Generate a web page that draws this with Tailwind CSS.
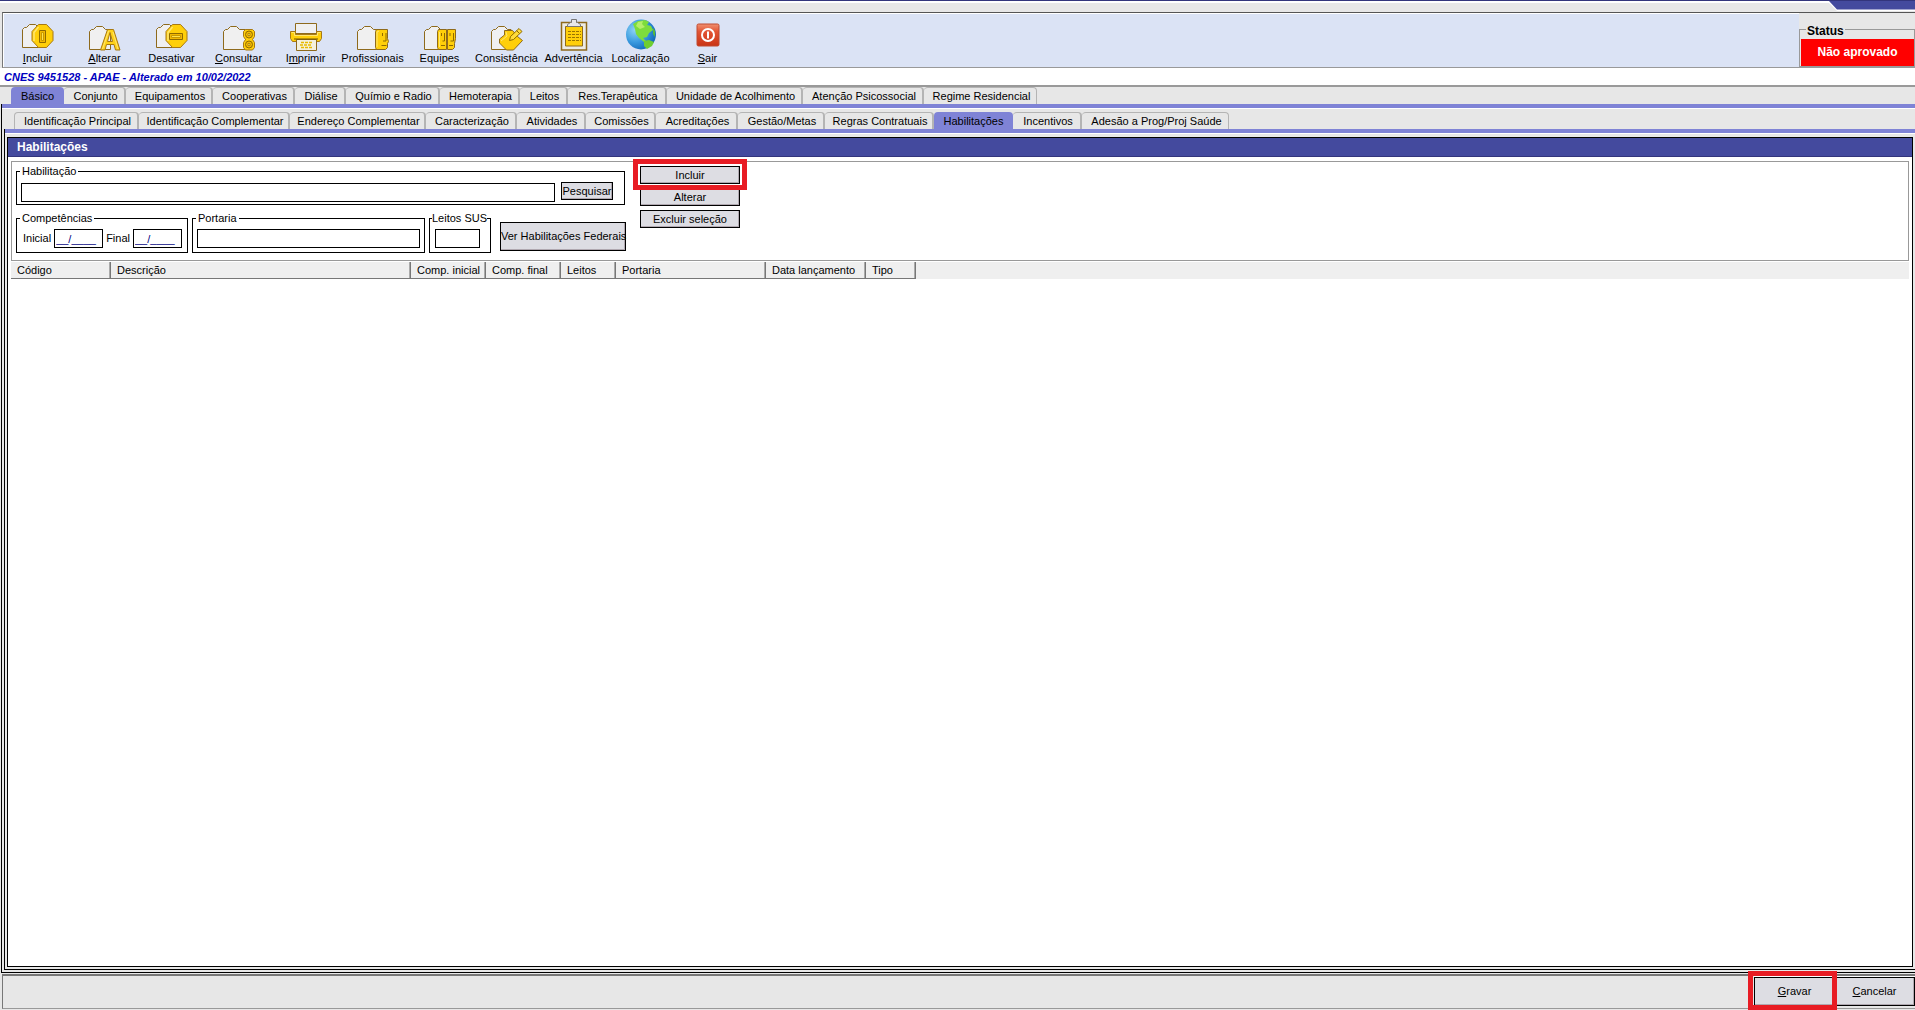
<!DOCTYPE html>
<html lang="pt-BR">
<head>
    <meta charset="UTF-8">
    <meta name="viewport" content="width=device-width, initial-scale=1.0">
    <title>CNES - Habilitações</title>
    <script src="https://cdn.jsdelivr.net/npm/@tailwindcss/browser@4"></script>
</head>
<body class="flex h-screen flex-col overflow-hidden bg-[#e7e7e7] font-['Liberation_Sans',Arial,sans-serif] text-[11px] leading-[15px] text-black">

    <!-- Window edge -->
    <div class="flex h-3 shrink-0 items-start justify-end border-t border-[#33357c]">
        <div class="h-[2px] flex-1 bg-white"></div>
        <svg class="h-[10px] w-[87px]" viewBox="0 0 87 10" aria-hidden="true">
            <path d="M0 0h87v10H9L1 2H0z" fill="#fff"/>
            <path d="M1 0h86v8.5H9z" fill="#444a9e"/>
        </svg>
    </div>

    <!-- Toolbar -->
    <header class="ml-[2px] flex h-14 shrink-0 border-y border-l border-t-[#555] border-b-[#999] border-l-[#777] bg-[#dbe3f5]">
        <nav class="flex flex-1 border-t border-l border-white">
            <button class="flex w-[67px] flex-col items-center pt-[5px]">
                <svg class="h-8 w-[34px] shrink-0" viewBox="0 0 34 32" aria-hidden="true">
                    <path d="M1.5 28.5V10.5L3.5 8.5H5.5L8.5 5.5H14.5L17.5 8.5H22V28.5z" fill="#f0f0f0" stroke="#8e6a1c"/>
                    <path d="M17.5 5.5h8l6.500 7v9l-6.500 7h-8l-6.500-7v-9z" fill="#ffcf0a" stroke="#a87912" stroke-linejoin="round"/>
                    <path d="M13 22v-8.500l4.500-5.500" fill="none" stroke="#ffe671" stroke-width="1.500"/>
                    <path d="M18.500 11.500h6v12h-6z" fill="#f3b800" stroke="#8e6a00"/>
                    <path d="M20.500 13.500h2v8h-2z" fill="#ffe14f" stroke="#c89800"/>
                </svg>
                <span><u>I</u>ncluir</span>
            </button>
            <button class="flex w-[67px] flex-col items-center pt-[5px]">
                <svg class="h-8 w-[34px] shrink-0" viewBox="0 0 34 32" aria-hidden="true">
                    <path d="M1.5 30.5V12.5L3.5 10.5H5.5L8.5 7.5H14.5L17.5 10.5H22.500V30.5z" fill="#f0f0f0" stroke="#8e6a1c"/>
                    <path fill-rule="evenodd" d="M12.500 31L19.500 10.500h6l6.500 20.500h-4.500l-1.500-5.500h-7.500L17 31zM19.500 22.500h5l-2.500-9z" fill="#ffd21a" stroke="#a87912"/>
                    <path d="M14.500 30l6-18M25 13l5 17" stroke="#ffe671" fill="none"/>
                </svg>
                <span><u>A</u>lterar</span>
            </button>
            <button class="flex w-[67px] flex-col items-center pt-[5px]">
                <svg class="h-8 w-[34px] shrink-0" viewBox="0 0 34 32" aria-hidden="true">
                    <path d="M1.5 28.5V10.5L3.5 8.5H5.5L8.5 5.5H14.5L17.5 8.5H22V28.5z" fill="#f0f0f0" stroke="#8e6a1c"/>
                    <path d="M17.5 5.5h8l6.500 7v9l-6.500 7h-8l-6.500-7v-9z" fill="#ffcf0a" stroke="#a87912" stroke-linejoin="round"/>
                    <path d="M13 22v-8.500l4.500-5.500" fill="none" stroke="#ffe671" stroke-width="1.500"/>
                    <path d="M14.500 14.500h13v6h-13z" fill="#f3b800" stroke="#8e6a00"/>
                    <path d="M16.500 16.500h9v2h-9z" fill="#ffe14f" stroke="#c89800"/>
                </svg>
                <span>Desativar</span>
            </button>
            <button class="flex w-[67px] flex-col items-center pt-[5px]">
                <svg class="h-8 w-[34px] shrink-0" viewBox="0 0 34 32" aria-hidden="true">
                    <path d="M1.5 30.5V12.5L3.5 10.5H5.5L8.5 7.5H14.5L17.5 10.5H23.500V30.5z" fill="#f0f0f0" stroke="#8e6a1c"/>
                    <path d="M23.500 10.500h7l2 2v5l-2 3 2 3v5l-2 2.500h-7l-2-2.500v-5l2-3-2-3v-5z" fill="#ffcf0a" stroke="#a87912"/>
                    <circle cx="27" cy="15.500" r="3.500" fill="#f3b800" stroke="#8e6a00"/>
                    <circle cx="27" cy="25.500" r="3.500" fill="#f3b800" stroke="#8e6a00"/>
                    <path d="M26 14.500h2v2h-2zM26 24.500h2v2h-2z" fill="#ffe14f" stroke="#8e6a00" stroke-width=".6"/>
                </svg>
                <span><u>C</u>onsultar</span>
            </button>
            <button class="flex w-[67px] flex-col items-center pt-[5px]">
                <svg class="h-8 w-[34px] shrink-0" viewBox="0 0 34 32" aria-hidden="true">
                    <path d="M6.500 4.500h21v10h-21z" fill="#f0f0f0" stroke="#8e6a1c"/>
                    <path d="M1.500 12.500h5v3h21v-3h5v7l-2 3h-27l-2-3z" fill="#ffcf0a" stroke="#a87912"/>
                    <path d="M2.500 13.500h3v3h23v-3h3" fill="none" stroke="#ffe671"/>
                    <path d="M7.500 20.500h20v11h-20z" fill="#f4f0dc" stroke="#8e6a1c"/>
                    <path d="M5 20h24" stroke="#6e5200"/>
                    <path d="M12 23.500h12M11 26h12M12 28.500h12" stroke="#e8ba00" stroke-width="1.500" stroke-dasharray="3 1"/>
                </svg>
                <span>I<u>m</u>primir</span>
            </button>
            <button class="flex w-[67px] flex-col items-center pt-[5px]">
                <svg class="h-8 w-[34px] shrink-0" viewBox="0 0 34 32" aria-hidden="true">
                    <path d="M1.5 30.5V12.5L3.5 10.5H5.5L8.5 7.5H14.5L17.5 10.5H22V30.5z" fill="#f0f0f0" stroke="#8e6a1c"/>
                    <path d="M20.500 10.500h11v9l1 3-1 2v4l-2 2h-9l-1-2v-16z" fill="#ffcf0a" stroke="#8e6a1c"/>
                    <path d="M21 28v-15l2-1" stroke="#ffe671" fill="none"/>
                    <path d="M26.500 14v3M30 14v8h-3M25.500 26.500h5" stroke="#8e6a00" fill="none"/>
                </svg>
                <span>Profissionais</span>
            </button>
            <button class="flex w-[67px] flex-col items-center pt-[5px]">
                <svg class="h-8 w-[34px] shrink-0" viewBox="0 0 34 32" aria-hidden="true">
                    <path d="M1.5 30.5V12.5L3.5 10.5H5.5L8.5 7.5H14.5L17.5 10.5V30.5z" fill="#f0f0f0" stroke="#8e6a1c"/>
                    <path d="M15.500 10.500h8v20h-8l-1-2v-16z" fill="#ffcf0a" stroke="#8e6a1c"/>
                    <path d="M24.500 10.500h8v9l-1 5v4l-2 2h-5z" fill="#ffcf0a" stroke="#8e6a1c"/>
                    <path d="M16.500 28v-15" stroke="#ffe671"/>
                    <path d="M18.500 14v3M21.500 14v8h-2M18 26.500h4M27 14v3M30.500 14v8h-3M26 26.500h4" stroke="#8e6a00" fill="none"/>
                </svg>
                <span>Equipes</span>
            </button>
            <button class="flex w-[67px] flex-col items-center pt-[5px]">
                <svg class="h-8 w-[34px] shrink-0" viewBox="0 0 34 32" aria-hidden="true">
                    <path d="M1.5 30.5V12.5L3.5 10.5H5.5L8.5 7.5H14.5L17.5 10.5H21V30.5z" fill="#f0f0f0" stroke="#8e6a1c"/>
                    <path d="M14.500 11.500h8l5 6 5 4-9 9.500h-7l-7-7v-4l5-4z" fill="#ffcf0a" stroke="#8e6a1c"/>
                    <path d="M11 22l6-5-1-4" stroke="#ffe671" fill="none"/>
                    <path d="M19.500 21.500l1-4 8.500-8 3 3-8.500 8z" fill="#ffdb3a" stroke="#8e6a00"/>
                    <path d="M26.500 11.500l3 3" stroke="#8e6a00"/>
                </svg>
                <span>Consistência</span>
            </button>
            <button class="flex w-[67px] flex-col items-center pt-[5px]">
                <svg class="h-8 w-[34px] shrink-0" viewBox="0 0 34 32" aria-hidden="true">
                    <path d="M4.500 3.500h25v27.500h-25z" fill="#ecebe4" stroke="#8e6a1c" stroke-width="1.500"/>
                    <path d="M8.500 7.500h17v19.500h-17z" fill="#ffcf0a" stroke="#8e6a1c"/>
                    <path d="M11 12.500h13M11 15.500h13M11 18.500h13M11 21.500h13" stroke="#9a7400" stroke-dasharray="3 1"/>
                    <path d="M10.500 7.500v-2l3-2h1v-3h5v3h1l3 2v2z" fill="#e8e8ea" stroke="#777"/>
                </svg>
                <span>Advertência</span>
            </button>
            <button class="flex w-[67px] flex-col items-center pt-[5px]">
                <svg class="h-8 w-[34px] shrink-0" viewBox="0 0 34 32" aria-hidden="true">
                    <defs>
                        <radialGradient id="ocean" cx=".3" cy=".35" r=".8">
                            <stop offset="0" stop-color="#8fd3f5"/>
                            <stop offset=".5" stop-color="#3a9be0"/>
                            <stop offset="1" stop-color="#0a5fb0"/>
                        </radialGradient>
                    </defs>
                    <circle cx="17" cy="15.500" r="15" fill="url(#ocean)"/>
                    <path d="M9 5l5-3 7-1 4 2-2 3 4 1 2 4-4 3-2 4-4 1 3 3-2 1-5-4-3-4-1-5z" fill="#7ddc3c"/>
                    <path d="M14 3l5-1-1 3 3 3-5 2-4-3z" fill="#b4ee6a"/>
                    <path d="M20 22l5-1 5 2-2 4-5 3-3-3z" fill="#6fce30"/>
                    <path d="M29 9l2 3v6l-2-3z" fill="#55b83c"/>
                </svg>
                <span>Localização</span>
            </button>
            <button class="flex w-[67px] flex-col items-center pt-[5px]">
                <svg class="h-8 w-[34px] shrink-0" viewBox="0 0 34 32" aria-hidden="true">
                    <defs>
                        <linearGradient id="exit" x1="0" y1="0" x2="0" y2="1">
                            <stop offset="0" stop-color="#f09070"/>
                            <stop offset=".35" stop-color="#e25434"/>
                            <stop offset="1" stop-color="#c93414"/>
                        </linearGradient>
                    </defs>
                    <rect x="6" y="5" width="22" height="22" rx="1.500" fill="url(#exit)" stroke="#c04a30"/>
                    <circle cx="17" cy="16" r="6" fill="none" stroke="#fff" stroke-width="2"/>
                    <path d="M17 12.500v7" stroke="#fff" stroke-width="2"/>
                </svg>
                <span><u>S</u>air</span>
            </button>
        </nav>
        <div class="flex w-[116px] shrink-0 flex-col bg-[#e7e7e7] pt-4">
            <div class="relative flex flex-1 flex-col border border-[#999] pt-[9px] pl-px">
                <div class="absolute -top-[6px] left-[6px] bg-[#e7e7e7] px-px text-[12px] leading-[14px] font-bold">Status</div>
                <output class="flex flex-1 items-center justify-center bg-[#ff0000] text-[12px] font-bold text-white">Não aprovado</output>
            </div>
        </div>
    </header>

    <!-- Current record -->
    <div class="h-[19px] shrink-0 border-b-2 border-[#999] bg-white pt-px pl-1">
        <p class="text-[11px] leading-[16px] font-bold text-[#0000c0] italic">CNES 9451528 - APAE - Alterado em 10/02/2022</p>
    </div>

    <!-- Main tabs -->
    <nav class="flex h-[17px] shrink-0 pl-[11px]">
        <a href="#" class="w-[53px] rounded-t-[4px] bg-[#7f83d6] pt-[2px] text-center">Básico</a>
        <a href="#" class="w-[62px] rounded-t-[4px] border-t border-r-2 border-[#b4b4b4] pt-px pl-[3px] text-center">Conjunto</a>
        <a href="#" class="w-[87px] rounded-t-[4px] border-t border-r-2 border-[#b4b4b4] pt-px pl-[3px] text-center">Equipamentos</a>
        <a href="#" class="w-[82px] rounded-t-[4px] border-t border-r-2 border-[#b4b4b4] pt-px pl-[3px] text-center">Cooperativas</a>
        <a href="#" class="w-[51px] rounded-t-[4px] border-t border-r-2 border-[#b4b4b4] pt-px pl-[3px] text-center">Diálise</a>
        <a href="#" class="w-[94px] rounded-t-[4px] border-t border-r-2 border-[#b4b4b4] pt-px pl-[3px] text-center">Químio e Radio</a>
        <a href="#" class="w-[80px] rounded-t-[4px] border-t border-r-2 border-[#b4b4b4] pt-px pl-[3px] text-center">Hemoterapia</a>
        <a href="#" class="w-[48px] rounded-t-[4px] border-t border-r-2 border-[#b4b4b4] pt-px pl-[3px] text-center">Leitos</a>
        <a href="#" class="w-[99px] rounded-t-[4px] border-t border-r-2 border-[#b4b4b4] pt-px pl-[3px] text-center">Res.Terapêutica</a>
        <a href="#" class="w-[136px] rounded-t-[4px] border-t border-r-2 border-[#b4b4b4] pt-px pl-[3px] text-center">Unidade de Acolhimento</a>
        <a href="#" class="w-[121px] rounded-t-[4px] border-t border-r-2 border-[#b4b4b4] pt-px pl-[3px] text-center">Atenção Psicossocial</a>
        <a href="#" class="w-[113px] rounded-t-[4px] border-t border-r border-[#b4b4b4] pt-px pl-[3px] text-center">Regime Residencial</a>
    </nav>

    <main class="ml-px flex min-h-0 flex-1 flex-col border-b border-l border-black pb-[2px]">
        <div class="h-[5px] shrink-0 border-b border-white bg-[#7f83d6]"></div>

        <!-- Sub tabs -->
        <nav class="flex h-5 shrink-0 pt-[3px] pl-3">
            <a href="#" class="w-[125px] rounded-t-[4px] border-t border-r-2 border-l border-[#b4b4b4] pt-px pl-[3px] text-center">Identificação Principal</a>
            <a href="#" class="w-[151px] rounded-t-[4px] border-t border-r-2 border-[#b4b4b4] pt-px pl-[3px] text-center">Identificação Complementar</a>
            <a href="#" class="w-[136px] rounded-t-[4px] border-t border-r-2 border-[#b4b4b4] pt-px pl-[3px] text-center">Endereço Complementar</a>
            <a href="#" class="w-[91px] rounded-t-[4px] border-t border-r-2 border-[#b4b4b4] pt-px pl-[3px] text-center">Caracterização</a>
            <a href="#" class="w-[69px] rounded-t-[4px] border-t border-r-2 border-[#b4b4b4] pt-px pl-[3px] text-center">Atividades</a>
            <a href="#" class="w-[70px] rounded-t-[4px] border-t border-r-2 border-[#b4b4b4] pt-px pl-[3px] text-center">Comissões</a>
            <a href="#" class="w-[82px] rounded-t-[4px] border-t border-r-2 border-[#b4b4b4] pt-px pl-[3px] text-center">Acreditações</a>
            <a href="#" class="w-[87px] rounded-t-[4px] border-t border-r-2 border-[#b4b4b4] pt-px pl-[3px] text-center">Gestão/Metas</a>
            <a href="#" class="w-[109px] rounded-t-[4px] border-t border-r-2 border-[#b4b4b4] pt-px pl-[3px] text-center">Regras Contratuais</a>
            <a href="#" class="w-[79px] rounded-t-[4px] bg-[#7f83d6] pt-[2px] text-center">Habilitações</a>
            <a href="#" class="w-[69px] rounded-t-[4px] border-t border-r-2 border-[#b4b4b4] pt-px pl-[3px] text-center">Incentivos</a>
            <a href="#" class="w-[147px] rounded-t-[4px] border-t border-r border-[#b4b4b4] pt-px pl-[3px] text-center">Adesão a Prog/Proj Saúde</a>
        </nav>

        <div class="ml-[2px] flex min-h-0 flex-1 flex-col border-b border-l border-black pb-[2px]">
            <div class="h-[5px] shrink-0 border-b border-white bg-[#7f83d6]"></div>
            <section class="mt-[3px] mr-[2px] ml-[2px] flex min-h-0 flex-1 flex-col border border-black bg-white">
                <h1 class="h-[19px] shrink-0 border-b border-[#33357c] bg-[#444a9e] pl-[9px] text-[12px] leading-[18px] font-bold text-white">Habilitações</h1>

                <form class="mx-[3px] mt-1 flex h-[100px] shrink-0 items-start border border-[#999] pt-[2px] pl-1">
                    <div class="flex w-[624px] flex-col gap-[6px]">
                        <fieldset class="h-[41px] w-[609px] border border-black px-1">
                            <legend class="-ml-px h-[15px] px-[2px]"><label for="habilitacao">Habilitação</label></legend>
                            <div class="mt-1 flex gap-[6px]">
                                <input id="habilitacao" type="text" class="h-[19px] w-[534px] border border-black bg-white px-[2px]">
                                <button type="button" class="-mt-px h-[18px] w-[52px] border border-black bg-[#dddde3] leading-none whitespace-nowrap shadow-[inset_-1px_-1px_0_#b0a8b0]">Pesquisar</button>
                            </div>
                        </fieldset>
                        <div class="flex items-start gap-1">
                            <fieldset class="h-[42px] w-[172px] border border-black pr-[5px] pl-[6px]">
                                <legend class="-ml-[3px] h-[15px] px-[2px]">Competências</legend>
                                <div class="mt-[3px] flex items-center justify-between">
                                    <label for="inicial">Inicial</label>
                                    <input id="inicial" type="text" value="__/____" class="h-[19px] w-[49px] border border-black bg-white px-px text-[#000080]">
                                    <label for="final">Final</label>
                                    <input id="final" type="text" value="__/____" class="h-[19px] w-[49px] border border-black bg-white px-px text-[#000080]">
                                </div>
                            </fieldset>
                            <fieldset class="h-[42px] w-[233px] border border-black px-1">
                                <legend class="-ml-px h-[15px] px-[2px]"><label for="portaria">Portaria</label></legend>
                                <input id="portaria" type="text" class="mt-[3px] block h-[19px] w-full border border-black bg-white px-[2px]">
                            </fieldset>
                            <fieldset class="h-[42px] w-[62px] min-w-0 border border-black px-[2px]">
                                <legend class="h-[15px] whitespace-nowrap"><label for="leitos">Leitos SUS</label></legend>
                                <input id="leitos" type="text" class="mt-[3px] ml-[3px] block h-[19px] w-[45px] border border-black bg-white px-[2px]">
                            </fieldset>
                            <button type="button" class="mt-[11px] ml-[5px] h-[29px] w-[126px] border border-black bg-[#dddde3] whitespace-nowrap shadow-[inset_-1px_-1px_0_#b0a8b0]">Ver Habilitações Federais</button>
                        </div>
                    </div>
                    <div class="relative flex w-[100px] flex-col gap-1 pt-[2px]">
                        <button type="button" class="h-[18px] border border-black bg-[#dddde3] leading-none shadow-[inset_-1px_-1px_0_#b0a8b0]">Incluir</button>
                        <button type="button" class="h-[18px] border border-black bg-[#dddde3] leading-none shadow-[inset_-1px_-1px_0_#b0a8b0]">Alterar</button>
                        <button type="button" class="h-[18px] border border-black bg-[#dddde3] leading-none shadow-[inset_-1px_-1px_0_#b0a8b0]">Excluir seleção</button>
                        <div class="pointer-events-none absolute -top-[5px] -right-[7px] -left-[7px] h-[31px] border-[5px] border-[#e81c24]"></div>
                    </div>
                </form>

                <div class="mx-[3px] mt-px h-[17px] shrink-0 bg-[#efefef]">
                    <table class="w-[905px] table-fixed border-separate border-spacing-0 text-left">
                        <thead>
                            <tr class="h-[17px]">
                                <th class="w-[100px] border-r border-b border-[#777] p-0 pl-[6px] font-normal shadow-[inset_-1px_0_0_#aaa]">Código</th>
                                <th class="w-[300px] border-r border-b border-[#777] p-0 pl-[6px] font-normal shadow-[inset_-1px_0_0_#aaa]">Descrição</th>
                                <th class="w-[75px] border-r border-b border-[#777] p-0 pl-[6px] font-normal whitespace-nowrap shadow-[inset_-1px_0_0_#aaa]">Comp. inicial</th>
                                <th class="w-[75px] border-r border-b border-[#777] p-0 pl-[6px] font-normal whitespace-nowrap shadow-[inset_-1px_0_0_#aaa]">Comp. final</th>
                                <th class="w-[55px] border-r border-b border-[#777] p-0 pl-[6px] font-normal shadow-[inset_-1px_0_0_#aaa]">Leitos</th>
                                <th class="w-[150px] border-r border-b border-[#777] p-0 pl-[6px] font-normal shadow-[inset_-1px_0_0_#aaa]">Portaria</th>
                                <th class="w-[100px] border-r border-b border-[#777] p-0 pl-[6px] font-normal whitespace-nowrap shadow-[inset_-1px_0_0_#aaa]">Data lançamento</th>
                                <th class="border-r border-b border-[#777] p-0 pl-[6px] font-normal shadow-[inset_-1px_0_0_#aaa]">Tipo</th>
                            </tr>
                        </thead>
                        <tbody></tbody>
                    </table>
                </div>
            </section>
        </div>
    </main>

    <!-- Footer actions -->
    <footer class="mt-px mb-px ml-[2px] flex h-[35px] shrink-0 justify-end border-t-2 border-b border-l border-t-[#777] border-b-[#999] border-l-[#777] pb-[2px]">
        <div class="relative flex w-[161px] border-t border-white">
            <button type="button" class="w-[81px] border border-black bg-[#dddde3] shadow-[inset_-1px_-1px_0_#b0a8b0]"><u>G</u>ravar</button>
            <button type="button" class="w-[80px] border border-l-0 border-black bg-[#dddde3] shadow-[inset_-1px_-1px_0_#b0a8b0]"><u>C</u>ancelar</button>
            <div class="pointer-events-none absolute -top-[6px] -left-[6px] h-[39px] w-[89px] border-[5px] border-[#e81c24]"></div>
        </div>
    </footer>
</body>
</html>
